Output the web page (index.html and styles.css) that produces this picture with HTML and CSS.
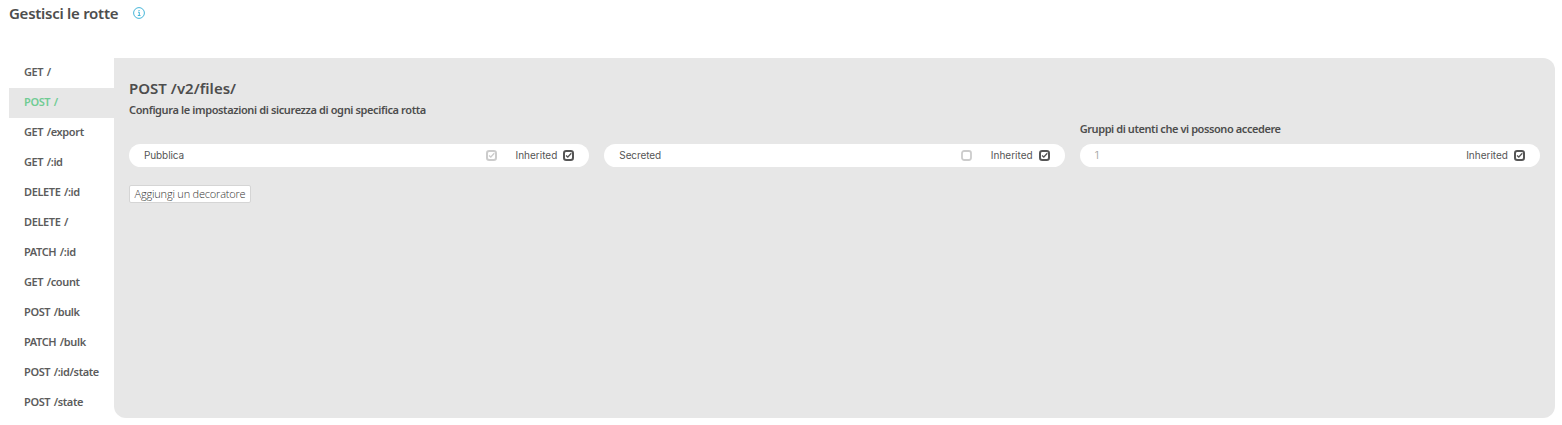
FILE: index.html
```html
<!DOCTYPE html>
<html lang="it">
<head>
<meta charset="utf-8">
<title>Gestisci le rotte</title>
<link rel="stylesheet" href="styles.css">
</head>
<body>
<svg class="defs" aria-hidden="true">
  <symbol id="checked" viewBox="0 0 11 11"><rect x="1" y="1" width="9" height="9" rx="2.2" fill="none" stroke="currentColor" stroke-width="2"/><path d="M3 5.4 4.8 7 8.3 3.3" fill="none" stroke="currentColor" stroke-width="1.3"/></symbol>
  <symbol id="unchecked" viewBox="0 0 11 11"><rect x="1" y="1" width="9" height="9" rx="2.2" fill="none" stroke="currentColor" stroke-width="1.8"/></symbol>
</svg>
<header class="header">
  <h1 class="title">Gestisci le rotte</h1>
  <svg class="info" viewBox="0 0 12 12"><circle cx="6" cy="6" r="5.4" fill="none" stroke="currentColor"/><path d="M5 5.2h1.3v3M4.8 8.5h2.7M5.5 3.5h1.1" fill="none" stroke="currentColor"/></svg>
</header>
<main class="main">
  <nav class="nav">
    <a class="route">GET /</a>
    <a class="route active">POST /</a>
    <a class="route">GET /export</a>
    <a class="route">GET /:id</a>
    <a class="route">DELETE /:id</a>
    <a class="route">DELETE /</a>
    <a class="route">PATCH /:id</a>
    <a class="route">GET /count</a>
    <a class="route">POST /bulk</a>
    <a class="route">PATCH /bulk</a>
    <a class="route">POST /:id/state</a>
    <a class="route">POST /state</a>
  </nav>
  <section class="panel">
    <h2 class="panel-title">POST /v2/files/</h2>
    <p class="subtitle">Configura le impostazioni di sicurezza di ogni specifica rotta</p>
    <div class="fields">
      <div class="field">
        <div class="pill"><span class="name">Pubblica</span><svg class="box disabled"><use href="#checked"/></svg><span class="inherited">Inherited</span><svg class="box"><use href="#checked"/></svg></div>
      </div>
      <div class="field">
        <div class="pill"><span class="name">Secreted</span><svg class="box disabled"><use href="#unchecked"/></svg><span class="inherited">Inherited</span><svg class="box"><use href="#checked"/></svg></div>
      </div>
      <div class="field">
        <div class="label">Gruppi di utenti che vi possono accedere</div>
        <div class="pill"><span class="name placeholder">1</span><span class="inherited">Inherited</span><svg class="box"><use href="#checked"/></svg></div>
      </div>
    </div>
    <button class="add">Aggiungi un decoratore</button>
  </section>
</main>
</body>
</html>
```
FILE: styles.css
```css
* { box-sizing: border-box; }
body {
  margin: 0;
  padding: 4px 7px 7px 9px;
  background: #fff;
  color: #4d4d4d;
  font-family: "Noto Sans", "Open Sans", sans-serif;
}
.defs { display: none; }
.header { display: flex; align-items: center; gap: 15px; height: 19px; }
.title, .panel-title { margin: 0; font-size: 15px; font-weight: 600; line-height: 20px; white-space: nowrap; }
.title { line-height: 18px; height: 19px; letter-spacing: -0.27px; }
.panel-title { height: 20px; letter-spacing: 0.03px; }
.info { width: 12px; height: 12px; margin-top: -1px; color: #45b5d8; }
.main { display: flex; height: 360px; margin-top: 35px; }
.nav { width: 105px; flex: none; }
.route {
  display: block;
  height: 30px;
  padding-left: 15px;
  font-size: 11px;
  font-weight: 600;
  line-height: 28px;
  letter-spacing: -0.38px;
  word-spacing: 1px;
  color: #5c5c5c;
  white-space: nowrap;
}
.route.active { background: #e7e7e7; color: #70cc94; }
.panel {
  flex: 1;
  padding: 20px 15px;
  background: #e7e7e7;
  border-radius: 0 12px 12px 12px;
}
.subtitle { margin: 4px 0 0; font-size: 11px; font-weight: 600; line-height: 16px; letter-spacing: -0.38px; }
.fields { display: flex; align-items: flex-end; gap: 15px; height: 49px; }
.field { flex: 1; }
.label { height: 26px; font-size: 11px; font-weight: 600; line-height: 16px; letter-spacing: -0.42px; padding-top: 3px; }
.pill {
  display: flex;
  align-items: center;
  height: 23px;
  padding: 0 15px;
  border-radius: 12px;
  background: #fff;
  font-family: Inter, sans-serif;
  font-size: 10px;
  font-weight: 400;
  line-height: 23px;
  color: #555;
}
.name { flex: 1; letter-spacing: -0.1px; }
.placeholder { color: #aaa; }
.inherited { margin: 0 6px 0 19px; }
.box { width: 11px; height: 11px; color: #555; }
.box.disabled { color: #ccc; }
.add {
  display: block;
  width: 122px;
  height: 18px;
  margin-top: 18px;
  padding: 0;
  border: 1px solid #d5d5d5;
  border-radius: 2px;
  background: #fff;
  color: #333;
  font-family: "Open Sans", sans-serif;
  font-size: 11px;
  font-weight: 300;
  line-height: 16px;
  letter-spacing: -0.2px;
  text-align: center;
  white-space: nowrap;
}
```
